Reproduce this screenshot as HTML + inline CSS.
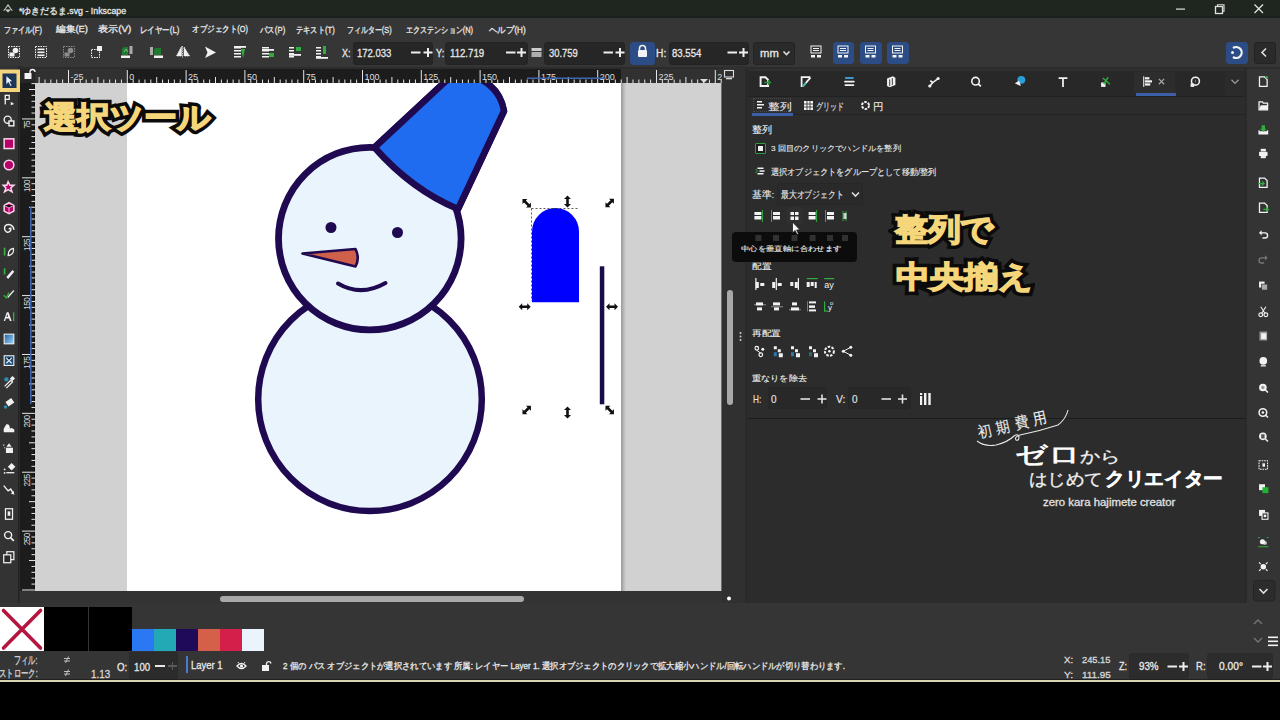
<!DOCTYPE html><html><head><meta charset="utf-8"><style>
*{margin:0;padding:0;box-sizing:border-box}
html,body{width:1280px;height:720px;overflow:hidden;background:#000;font-family:"Liberation Sans",sans-serif}
.a{position:absolute}
.t{position:absolute;white-space:nowrap;transform-origin:0 0;-webkit-text-stroke:0.3px currentColor}
svg{position:absolute;overflow:visible}
</style></head><body>
<div class="a" style="left:0px;top:0px;width:1280px;height:17px;background:#1f2620;"></div>
<div class="a" style="left:0px;top:16px;width:1280px;height:2px;background:#1b201c;"></div>
<div class="a" style="left:0px;top:18px;width:1280px;height:49px;background:#363636;"></div>
<div class="a" style="left:0px;top:67px;width:1280px;height:2px;background:#2c2c2c;"></div>
<div class="a" style="left:0px;top:66px;width:17.5px;height:537px;background:#333333;"></div>
<div class="a" style="left:17.5px;top:66px;width:1px;height:537px;background:#222222;"></div>
<div class="a" style="left:18.5px;top:66px;width:4.5px;height:537px;background:#2c2c2c;"></div>
<div class="a" style="left:20px;top:69px;width:702px;height:14px;background:#313131;"></div>
<div class="a" style="left:127px;top:69px;width:494px;height:14px;background:#1c1c1c;"></div>
<div class="a" style="left:20px;top:69px;width:15px;height:14px;background:#262626;"></div>
<div class="a" style="left:20px;top:83px;width:14px;height:508px;background:#1c1c1c;"></div>
<div class="a" style="left:34px;top:83px;width:1px;height:508px;background:#0e0e0e;"></div>
<div class="a" style="left:20px;top:591px;width:703px;height:12px;background:#333333;"></div>
<div class="a" style="left:722px;top:69px;width:23px;height:534px;background:#303030;"></div>
<div class="a" style="left:745px;top:69px;width:3px;height:534px;background:#2a2a2a;"></div>
<div class="a" style="left:748px;top:69px;width:498px;height:534px;background:#2c2c2c;"></div>
<div class="a" style="left:748px;top:69px;width:498px;height:2px;background:#303030;"></div>
<div class="a" style="left:748px;top:71px;width:498px;height:25px;background:#282828;"></div>
<div class="a" style="left:748px;top:96px;width:498px;height:1px;background:#212121;"></div>
<div class="a" style="left:1245px;top:69px;width:1.5px;height:534px;background:#2a2a2a;"></div>
<div class="a" style="left:1246.5px;top:69px;width:33.5px;height:534px;background:#343434;"></div>
<div class="a" style="left:0px;top:603px;width:1280px;height:48px;background:#353535;"></div>
<div class="a" style="left:0px;top:651px;width:1280px;height:29px;background:#353535;"></div>
<div class="a" style="left:0px;top:679px;width:1280px;height:1px;background:#202020;"></div>
<div class="a" style="left:0px;top:680px;width:1280px;height:2px;background:#d8d6b2;"></div>
<div class="a" style="left:0px;top:682px;width:1280px;height:38px;background:#000;"></div>
<svg style="left:35px;top:83px" width="687" height="508" viewBox="35 83 687 508">
<defs><clipPath id="cv"><rect x="35" y="83" width="687" height="508"/></clipPath>
<linearGradient id="sh" x1="0" x2="1"><stop offset="0" stop-color="#9a9a9a"/><stop offset="1" stop-color="#d1d1d1"/></linearGradient></defs>
<g clip-path="url(#cv)">
<rect x="35" y="83" width="687" height="508" fill="#d1d1d1"/>
<rect x="621" y="83" width="5" height="508" fill="url(#sh)"/><rect x="721.5" y="83" width="1.5" height="508" fill="#0a0a0a"/>
<rect x="127" y="83" width="494" height="508" fill="#ffffff"/>

<circle cx="370" cy="399.2" r="111.8" fill="#eaf4fc" stroke="#1f0a52" stroke-width="6.5"/>
<path d="M374.5,147.5 L447,80 L478,78 Q500,88 504,111 L458,209 Q412,190 374.5,147.5 Z" fill="#1f6cf0" stroke="#1f0a52" stroke-width="6.5" stroke-linejoin="round"/>
<circle cx="369.8" cy="238.6" r="91.3" fill="#eaf4fc" stroke="#1f0a52" stroke-width="6.8"/>
<path d="M374.5,147.5 L447,80 L478,78 Q500,88 504,111 L458,209 Q412,190 374.5,147.5 Z" fill="#1f6cf0" stroke="#1f0a52" stroke-width="6.5" stroke-linejoin="round"/>
<circle cx="331" cy="227.5" r="5.5" fill="#1f0a52"/><circle cx="397.5" cy="232.5" r="5.5" fill="#1f0a52"/>
<path d="M302.5,253.5 L355.5,249 Q360,258 355.5,266.5 Z" fill="#d1604b" stroke="#1f0a52" stroke-width="2.6" stroke-linejoin="round"/>
<path d="M338,283.5 Q361,297 385.5,283" fill="none" stroke="#1f0a52" stroke-width="4" stroke-linecap="round"/>
<path d="M532,302.2 L532,231.5 A23.5,23.5 0 0 1 579,231.5 L579,302.2 Z" fill="#0000ff"/>
<path d="M531.5,208.5 H579 M531.5,208.5 V301" stroke="#333" stroke-width="0.8" stroke-dasharray="2,2" fill="none"/>
<rect x="599.8" y="266.3" width="4.5" height="138" fill="#1a0a4a"/>
<g transform="translate(526.7,203.3) rotate(45)"><path d="M-6,0 L-2.5,-3.5 L-2.5,-1.3 L2.5,-1.3 L2.5,-3.5 L6,0 L2.5,3.5 L2.5,1.3 L-2.5,1.3 L-2.5,3.5 Z" fill="#111"/></g>
<g transform="translate(567.5,201.5) rotate(90)"><path d="M-6,0 L-2.5,-3.5 L-2.5,-1.3 L2.5,-1.3 L2.5,-3.5 L6,0 L2.5,3.5 L2.5,1.3 L-2.5,1.3 L-2.5,3.5 Z" fill="#111"/></g>
<g transform="translate(609.7,203) rotate(-45)"><path d="M-6,0 L-2.5,-3.5 L-2.5,-1.3 L2.5,-1.3 L2.5,-3.5 L6,0 L2.5,3.5 L2.5,1.3 L-2.5,1.3 L-2.5,3.5 Z" fill="#111"/></g>
<g transform="translate(524.7,306.7) rotate(0)"><path d="M-6,0 L-2.5,-3.5 L-2.5,-1.3 L2.5,-1.3 L2.5,-3.5 L6,0 L2.5,3.5 L2.5,1.3 L-2.5,1.3 L-2.5,3.5 Z" fill="#111"/></g>
<g transform="translate(612,306.7) rotate(0)"><path d="M-6,0 L-2.5,-3.5 L-2.5,-1.3 L2.5,-1.3 L2.5,-3.5 L6,0 L2.5,3.5 L2.5,1.3 L-2.5,1.3 L-2.5,3.5 Z" fill="#111"/></g>
<g transform="translate(526.7,410) rotate(-45)"><path d="M-6,0 L-2.5,-3.5 L-2.5,-1.3 L2.5,-1.3 L2.5,-3.5 L6,0 L2.5,3.5 L2.5,1.3 L-2.5,1.3 L-2.5,3.5 Z" fill="#111"/></g>
<g transform="translate(567.5,412.5) rotate(90)"><path d="M-6,0 L-2.5,-3.5 L-2.5,-1.3 L2.5,-1.3 L2.5,-3.5 L6,0 L2.5,3.5 L2.5,1.3 L-2.5,1.3 L-2.5,3.5 Z" fill="#111"/></g>
<g transform="translate(609.7,410) rotate(45)"><path d="M-6,0 L-2.5,-3.5 L-2.5,-1.3 L2.5,-1.3 L2.5,-3.5 L6,0 L2.5,3.5 L2.5,1.3 L-2.5,1.3 L-2.5,3.5 Z" fill="#111"/></g>
</g></svg>
<svg style="left:0;top:0" width="1280" height="720"><rect x="38.60" y="77.00" width="1" height="6" fill="#e6e6e6"/><rect x="44.48" y="79.50" width="1" height="3.5" fill="#e6e6e6"/><rect x="50.36" y="79.50" width="1" height="3.5" fill="#e6e6e6"/><rect x="56.24" y="79.50" width="1" height="3.5" fill="#e6e6e6"/><rect x="62.12" y="79.50" width="1" height="3.5" fill="#e6e6e6"/><rect x="68.00" y="70.00" width="1" height="13" fill="#e6e6e6"/><rect x="73.88" y="79.50" width="1" height="3.5" fill="#e6e6e6"/><rect x="79.76" y="79.50" width="1" height="3.5" fill="#e6e6e6"/><rect x="85.64" y="79.50" width="1" height="3.5" fill="#e6e6e6"/><rect x="91.52" y="79.50" width="1" height="3.5" fill="#e6e6e6"/><rect x="97.40" y="77.00" width="1" height="6" fill="#e6e6e6"/><rect x="103.28" y="79.50" width="1" height="3.5" fill="#e6e6e6"/><rect x="109.16" y="79.50" width="1" height="3.5" fill="#e6e6e6"/><rect x="115.04" y="79.50" width="1" height="3.5" fill="#e6e6e6"/><rect x="120.92" y="79.50" width="1" height="3.5" fill="#e6e6e6"/><rect x="126.80" y="70.00" width="1" height="13" fill="#e6e6e6"/><rect x="132.68" y="79.50" width="1" height="3.5" fill="#e6e6e6"/><rect x="138.56" y="79.50" width="1" height="3.5" fill="#e6e6e6"/><rect x="144.44" y="79.50" width="1" height="3.5" fill="#e6e6e6"/><rect x="150.32" y="79.50" width="1" height="3.5" fill="#e6e6e6"/><rect x="156.20" y="77.00" width="1" height="6" fill="#e6e6e6"/><rect x="162.08" y="79.50" width="1" height="3.5" fill="#e6e6e6"/><rect x="167.96" y="79.50" width="1" height="3.5" fill="#e6e6e6"/><rect x="173.84" y="79.50" width="1" height="3.5" fill="#e6e6e6"/><rect x="179.72" y="79.50" width="1" height="3.5" fill="#e6e6e6"/><rect x="185.60" y="70.00" width="1" height="13" fill="#e6e6e6"/><rect x="191.48" y="79.50" width="1" height="3.5" fill="#e6e6e6"/><rect x="197.36" y="79.50" width="1" height="3.5" fill="#e6e6e6"/><rect x="203.24" y="79.50" width="1" height="3.5" fill="#e6e6e6"/><rect x="209.12" y="79.50" width="1" height="3.5" fill="#e6e6e6"/><rect x="215.00" y="77.00" width="1" height="6" fill="#e6e6e6"/><rect x="220.88" y="79.50" width="1" height="3.5" fill="#e6e6e6"/><rect x="226.76" y="79.50" width="1" height="3.5" fill="#e6e6e6"/><rect x="232.64" y="79.50" width="1" height="3.5" fill="#e6e6e6"/><rect x="238.52" y="79.50" width="1" height="3.5" fill="#e6e6e6"/><rect x="244.40" y="70.00" width="1" height="13" fill="#e6e6e6"/><rect x="250.28" y="79.50" width="1" height="3.5" fill="#e6e6e6"/><rect x="256.16" y="79.50" width="1" height="3.5" fill="#e6e6e6"/><rect x="262.04" y="79.50" width="1" height="3.5" fill="#e6e6e6"/><rect x="267.92" y="79.50" width="1" height="3.5" fill="#e6e6e6"/><rect x="273.80" y="77.00" width="1" height="6" fill="#e6e6e6"/><rect x="279.68" y="79.50" width="1" height="3.5" fill="#e6e6e6"/><rect x="285.56" y="79.50" width="1" height="3.5" fill="#e6e6e6"/><rect x="291.44" y="79.50" width="1" height="3.5" fill="#e6e6e6"/><rect x="297.32" y="79.50" width="1" height="3.5" fill="#e6e6e6"/><rect x="303.20" y="70.00" width="1" height="13" fill="#e6e6e6"/><rect x="309.08" y="79.50" width="1" height="3.5" fill="#e6e6e6"/><rect x="314.96" y="79.50" width="1" height="3.5" fill="#e6e6e6"/><rect x="320.84" y="79.50" width="1" height="3.5" fill="#e6e6e6"/><rect x="326.72" y="79.50" width="1" height="3.5" fill="#e6e6e6"/><rect x="332.60" y="77.00" width="1" height="6" fill="#e6e6e6"/><rect x="338.48" y="79.50" width="1" height="3.5" fill="#e6e6e6"/><rect x="344.36" y="79.50" width="1" height="3.5" fill="#e6e6e6"/><rect x="350.24" y="79.50" width="1" height="3.5" fill="#e6e6e6"/><rect x="356.12" y="79.50" width="1" height="3.5" fill="#e6e6e6"/><rect x="362.00" y="70.00" width="1" height="13" fill="#e6e6e6"/><rect x="367.88" y="79.50" width="1" height="3.5" fill="#e6e6e6"/><rect x="373.76" y="79.50" width="1" height="3.5" fill="#e6e6e6"/><rect x="379.64" y="79.50" width="1" height="3.5" fill="#e6e6e6"/><rect x="385.52" y="79.50" width="1" height="3.5" fill="#e6e6e6"/><rect x="391.40" y="77.00" width="1" height="6" fill="#e6e6e6"/><rect x="397.28" y="79.50" width="1" height="3.5" fill="#e6e6e6"/><rect x="403.16" y="79.50" width="1" height="3.5" fill="#e6e6e6"/><rect x="409.04" y="79.50" width="1" height="3.5" fill="#e6e6e6"/><rect x="414.92" y="79.50" width="1" height="3.5" fill="#e6e6e6"/><rect x="420.80" y="70.00" width="1" height="13" fill="#e6e6e6"/><rect x="426.68" y="79.50" width="1" height="3.5" fill="#e6e6e6"/><rect x="432.56" y="79.50" width="1" height="3.5" fill="#e6e6e6"/><rect x="438.44" y="79.50" width="1" height="3.5" fill="#e6e6e6"/><rect x="444.32" y="79.50" width="1" height="3.5" fill="#e6e6e6"/><rect x="450.20" y="77.00" width="1" height="6" fill="#e6e6e6"/><rect x="456.08" y="79.50" width="1" height="3.5" fill="#e6e6e6"/><rect x="461.96" y="79.50" width="1" height="3.5" fill="#e6e6e6"/><rect x="467.84" y="79.50" width="1" height="3.5" fill="#e6e6e6"/><rect x="473.72" y="79.50" width="1" height="3.5" fill="#e6e6e6"/><rect x="479.60" y="70.00" width="1" height="13" fill="#e6e6e6"/><rect x="485.48" y="79.50" width="1" height="3.5" fill="#e6e6e6"/><rect x="491.36" y="79.50" width="1" height="3.5" fill="#e6e6e6"/><rect x="497.24" y="79.50" width="1" height="3.5" fill="#e6e6e6"/><rect x="503.12" y="79.50" width="1" height="3.5" fill="#e6e6e6"/><rect x="509.00" y="77.00" width="1" height="6" fill="#e6e6e6"/><rect x="514.88" y="79.50" width="1" height="3.5" fill="#e6e6e6"/><rect x="520.76" y="79.50" width="1" height="3.5" fill="#e6e6e6"/><rect x="526.64" y="79.50" width="1" height="3.5" fill="#e6e6e6"/><rect x="532.52" y="79.50" width="1" height="3.5" fill="#e6e6e6"/><rect x="538.40" y="70.00" width="1" height="13" fill="#e6e6e6"/><rect x="544.28" y="79.50" width="1" height="3.5" fill="#e6e6e6"/><rect x="550.16" y="79.50" width="1" height="3.5" fill="#e6e6e6"/><rect x="556.04" y="79.50" width="1" height="3.5" fill="#e6e6e6"/><rect x="561.92" y="79.50" width="1" height="3.5" fill="#e6e6e6"/><rect x="567.80" y="77.00" width="1" height="6" fill="#e6e6e6"/><rect x="573.68" y="79.50" width="1" height="3.5" fill="#e6e6e6"/><rect x="579.56" y="79.50" width="1" height="3.5" fill="#e6e6e6"/><rect x="585.44" y="79.50" width="1" height="3.5" fill="#e6e6e6"/><rect x="591.32" y="79.50" width="1" height="3.5" fill="#e6e6e6"/><rect x="597.20" y="70.00" width="1" height="13" fill="#e6e6e6"/><rect x="603.08" y="79.50" width="1" height="3.5" fill="#e6e6e6"/><rect x="608.96" y="79.50" width="1" height="3.5" fill="#e6e6e6"/><rect x="614.84" y="79.50" width="1" height="3.5" fill="#e6e6e6"/><rect x="620.72" y="79.50" width="1" height="3.5" fill="#e6e6e6"/><rect x="626.60" y="77.00" width="1" height="6" fill="#e6e6e6"/><rect x="632.48" y="79.50" width="1" height="3.5" fill="#e6e6e6"/><rect x="638.36" y="79.50" width="1" height="3.5" fill="#e6e6e6"/><rect x="644.24" y="79.50" width="1" height="3.5" fill="#e6e6e6"/><rect x="650.12" y="79.50" width="1" height="3.5" fill="#e6e6e6"/><rect x="656.00" y="70.00" width="1" height="13" fill="#e6e6e6"/><rect x="661.88" y="79.50" width="1" height="3.5" fill="#e6e6e6"/><rect x="667.76" y="79.50" width="1" height="3.5" fill="#e6e6e6"/><rect x="673.64" y="79.50" width="1" height="3.5" fill="#e6e6e6"/><rect x="679.52" y="79.50" width="1" height="3.5" fill="#e6e6e6"/><rect x="685.40" y="77.00" width="1" height="6" fill="#e6e6e6"/><rect x="691.28" y="79.50" width="1" height="3.5" fill="#e6e6e6"/><rect x="697.16" y="79.50" width="1" height="3.5" fill="#e6e6e6"/><rect x="703.04" y="79.50" width="1" height="3.5" fill="#e6e6e6"/><rect x="708.92" y="79.50" width="1" height="3.5" fill="#e6e6e6"/><rect x="714.80" y="70.00" width="1" height="13" fill="#e6e6e6"/><rect x="720.68" y="79.50" width="1" height="3.5" fill="#e6e6e6"/><text x="70.5" y="79.5" font-size="9" fill="#dedede" font-family="Liberation Sans">-25</text><text x="129.3" y="79.5" font-size="9" fill="#dedede" font-family="Liberation Sans">0</text><text x="188.1" y="79.5" font-size="9" fill="#dedede" font-family="Liberation Sans">25</text><text x="246.9" y="79.5" font-size="9" fill="#dedede" font-family="Liberation Sans">50</text><text x="305.7" y="79.5" font-size="9" fill="#dedede" font-family="Liberation Sans">75</text><text x="364.5" y="79.5" font-size="9" fill="#dedede" font-family="Liberation Sans">100</text><text x="423.3" y="79.5" font-size="9" fill="#dedede" font-family="Liberation Sans">125</text><text x="482.1" y="79.5" font-size="9" fill="#dedede" font-family="Liberation Sans">150</text><text x="540.9" y="79.5" font-size="9" fill="#dedede" font-family="Liberation Sans">175</text><text x="599.7" y="79.5" font-size="9" fill="#dedede" font-family="Liberation Sans">200</text><text x="658.5" y="79.5" font-size="9" fill="#dedede" font-family="Liberation Sans">225</text><text x="717.3" y="79.5" font-size="9" fill="#dedede" font-family="Liberation Sans">250</text><rect x="527" y="77.5" width="79" height="1.5" fill="#3e66b0"/><path d="M700,79 L708,79 L704,83 Z" fill="#ddd"/><rect x="31.50" y="83.11" width="3.5" height="1" fill="#e6e6e6"/><rect x="29.00" y="89.00" width="6" height="1" fill="#e6e6e6"/><rect x="31.50" y="94.89" width="3.5" height="1" fill="#e6e6e6"/><rect x="31.50" y="100.78" width="3.5" height="1" fill="#e6e6e6"/><rect x="31.50" y="106.66" width="3.5" height="1" fill="#e6e6e6"/><rect x="31.50" y="112.55" width="3.5" height="1" fill="#e6e6e6"/><rect x="22.00" y="118.44" width="13" height="1" fill="#e6e6e6"/><rect x="31.50" y="124.33" width="3.5" height="1" fill="#e6e6e6"/><rect x="31.50" y="130.22" width="3.5" height="1" fill="#e6e6e6"/><rect x="31.50" y="136.10" width="3.5" height="1" fill="#e6e6e6"/><rect x="31.50" y="141.99" width="3.5" height="1" fill="#e6e6e6"/><rect x="29.00" y="147.88" width="6" height="1" fill="#e6e6e6"/><rect x="31.50" y="153.77" width="3.5" height="1" fill="#e6e6e6"/><rect x="31.50" y="159.66" width="3.5" height="1" fill="#e6e6e6"/><rect x="31.50" y="165.54" width="3.5" height="1" fill="#e6e6e6"/><rect x="31.50" y="171.43" width="3.5" height="1" fill="#e6e6e6"/><rect x="22.00" y="177.32" width="13" height="1" fill="#e6e6e6"/><rect x="31.50" y="183.21" width="3.5" height="1" fill="#e6e6e6"/><rect x="31.50" y="189.10" width="3.5" height="1" fill="#e6e6e6"/><rect x="31.50" y="194.98" width="3.5" height="1" fill="#e6e6e6"/><rect x="31.50" y="200.87" width="3.5" height="1" fill="#e6e6e6"/><rect x="29.00" y="206.76" width="6" height="1" fill="#e6e6e6"/><rect x="31.50" y="212.65" width="3.5" height="1" fill="#e6e6e6"/><rect x="31.50" y="218.54" width="3.5" height="1" fill="#e6e6e6"/><rect x="31.50" y="224.42" width="3.5" height="1" fill="#e6e6e6"/><rect x="31.50" y="230.31" width="3.5" height="1" fill="#e6e6e6"/><rect x="22.00" y="236.20" width="13" height="1" fill="#e6e6e6"/><rect x="31.50" y="242.09" width="3.5" height="1" fill="#e6e6e6"/><rect x="31.50" y="247.98" width="3.5" height="1" fill="#e6e6e6"/><rect x="31.50" y="253.86" width="3.5" height="1" fill="#e6e6e6"/><rect x="31.50" y="259.75" width="3.5" height="1" fill="#e6e6e6"/><rect x="29.00" y="265.64" width="6" height="1" fill="#e6e6e6"/><rect x="31.50" y="271.53" width="3.5" height="1" fill="#e6e6e6"/><rect x="31.50" y="277.42" width="3.5" height="1" fill="#e6e6e6"/><rect x="31.50" y="283.30" width="3.5" height="1" fill="#e6e6e6"/><rect x="31.50" y="289.19" width="3.5" height="1" fill="#e6e6e6"/><rect x="22.00" y="295.08" width="13" height="1" fill="#e6e6e6"/><rect x="31.50" y="300.97" width="3.5" height="1" fill="#e6e6e6"/><rect x="31.50" y="306.86" width="3.5" height="1" fill="#e6e6e6"/><rect x="31.50" y="312.74" width="3.5" height="1" fill="#e6e6e6"/><rect x="31.50" y="318.63" width="3.5" height="1" fill="#e6e6e6"/><rect x="29.00" y="324.52" width="6" height="1" fill="#e6e6e6"/><rect x="31.50" y="330.41" width="3.5" height="1" fill="#e6e6e6"/><rect x="31.50" y="336.30" width="3.5" height="1" fill="#e6e6e6"/><rect x="31.50" y="342.18" width="3.5" height="1" fill="#e6e6e6"/><rect x="31.50" y="348.07" width="3.5" height="1" fill="#e6e6e6"/><rect x="22.00" y="353.96" width="13" height="1" fill="#e6e6e6"/><rect x="31.50" y="359.85" width="3.5" height="1" fill="#e6e6e6"/><rect x="31.50" y="365.74" width="3.5" height="1" fill="#e6e6e6"/><rect x="31.50" y="371.62" width="3.5" height="1" fill="#e6e6e6"/><rect x="31.50" y="377.51" width="3.5" height="1" fill="#e6e6e6"/><rect x="29.00" y="383.40" width="6" height="1" fill="#e6e6e6"/><rect x="31.50" y="389.29" width="3.5" height="1" fill="#e6e6e6"/><rect x="31.50" y="395.18" width="3.5" height="1" fill="#e6e6e6"/><rect x="31.50" y="401.06" width="3.5" height="1" fill="#e6e6e6"/><rect x="31.50" y="406.95" width="3.5" height="1" fill="#e6e6e6"/><rect x="22.00" y="412.84" width="13" height="1" fill="#e6e6e6"/><rect x="31.50" y="418.73" width="3.5" height="1" fill="#e6e6e6"/><rect x="31.50" y="424.62" width="3.5" height="1" fill="#e6e6e6"/><rect x="31.50" y="430.50" width="3.5" height="1" fill="#e6e6e6"/><rect x="31.50" y="436.39" width="3.5" height="1" fill="#e6e6e6"/><rect x="29.00" y="442.28" width="6" height="1" fill="#e6e6e6"/><rect x="31.50" y="448.17" width="3.5" height="1" fill="#e6e6e6"/><rect x="31.50" y="454.06" width="3.5" height="1" fill="#e6e6e6"/><rect x="31.50" y="459.94" width="3.5" height="1" fill="#e6e6e6"/><rect x="31.50" y="465.83" width="3.5" height="1" fill="#e6e6e6"/><rect x="22.00" y="471.72" width="13" height="1" fill="#e6e6e6"/><rect x="31.50" y="477.61" width="3.5" height="1" fill="#e6e6e6"/><rect x="31.50" y="483.50" width="3.5" height="1" fill="#e6e6e6"/><rect x="31.50" y="489.38" width="3.5" height="1" fill="#e6e6e6"/><rect x="31.50" y="495.27" width="3.5" height="1" fill="#e6e6e6"/><rect x="29.00" y="501.16" width="6" height="1" fill="#e6e6e6"/><rect x="31.50" y="507.05" width="3.5" height="1" fill="#e6e6e6"/><rect x="31.50" y="512.94" width="3.5" height="1" fill="#e6e6e6"/><rect x="31.50" y="518.82" width="3.5" height="1" fill="#e6e6e6"/><rect x="31.50" y="524.71" width="3.5" height="1" fill="#e6e6e6"/><rect x="22.00" y="530.60" width="13" height="1" fill="#e6e6e6"/><rect x="31.50" y="536.49" width="3.5" height="1" fill="#e6e6e6"/><rect x="31.50" y="542.38" width="3.5" height="1" fill="#e6e6e6"/><rect x="31.50" y="548.26" width="3.5" height="1" fill="#e6e6e6"/><rect x="31.50" y="554.15" width="3.5" height="1" fill="#e6e6e6"/><rect x="29.00" y="560.04" width="6" height="1" fill="#e6e6e6"/><rect x="31.50" y="565.93" width="3.5" height="1" fill="#e6e6e6"/><rect x="31.50" y="571.82" width="3.5" height="1" fill="#e6e6e6"/><rect x="31.50" y="577.70" width="3.5" height="1" fill="#e6e6e6"/><rect x="31.50" y="583.59" width="3.5" height="1" fill="#e6e6e6"/><rect x="22.00" y="589.48" width="13" height="1" fill="#e6e6e6"/><text transform="translate(29.5,128.7) rotate(-90)" font-size="8.3" fill="#dedede" font-family="Liberation Sans" textLength="8.4">75</text><text transform="translate(29.5,192.0) rotate(-90)" font-size="8.3" fill="#dedede" font-family="Liberation Sans" textLength="12.6">100</text><text transform="translate(29.5,250.9) rotate(-90)" font-size="8.3" fill="#dedede" font-family="Liberation Sans" textLength="12.6">125</text><text transform="translate(29.5,309.8) rotate(-90)" font-size="8.3" fill="#dedede" font-family="Liberation Sans" textLength="12.6">150</text><text transform="translate(29.5,368.7) rotate(-90)" font-size="8.3" fill="#dedede" font-family="Liberation Sans" textLength="12.6">175</text><text transform="translate(29.5,427.5) rotate(-90)" font-size="8.3" fill="#dedede" font-family="Liberation Sans" textLength="12.6">200</text><text transform="translate(29.5,486.4) rotate(-90)" font-size="8.3" fill="#dedede" font-family="Liberation Sans" textLength="12.6">225</text><text transform="translate(29.5,545.3) rotate(-90)" font-size="8.3" fill="#dedede" font-family="Liberation Sans" textLength="12.6">250</text><rect x="30" y="207" width="1.5" height="197" fill="#3e66b0"/></svg>
<div class="a" style="left:722px;top:66px;width:23px;height:17px;background:#303030;"></div>
<div class="a" style="left:352.5px;top:41.5px;width:80.5px;height:23.0px;background:#262626;border-radius:3px;border:1px solid #232323"></div>
<div class="a" style="left:445px;top:41.5px;width:83px;height:23.0px;background:#262626;border-radius:3px;border:1px solid #232323"></div>
<div class="a" style="left:544px;top:41.5px;width:81px;height:23.0px;background:#262626;border-radius:3px;border:1px solid #232323"></div>
<div class="a" style="left:629.5px;top:41.5px;width:25.5px;height:23.0px;background:#2b4c85;border-radius:3px;border:1px solid #2b4c85"></div>
<div class="a" style="left:669px;top:41.5px;width:80px;height:23.0px;background:#262626;border-radius:3px;border:1px solid #232323"></div>
<div class="a" style="left:752.5px;top:41.5px;width:42.5px;height:23.0px;background:#2a2a2a;border-radius:3px;border:1px solid #232323"></div>
<div class="a" style="left:832.5px;top:41.5px;width:21.5px;height:22.0px;background:#2b4c85;border-radius:3px;border:1px solid #2b4c85"></div>
<div class="a" style="left:860px;top:41.5px;width:21.5px;height:22.0px;background:#2b4c85;border-radius:3px;border:1px solid #2b4c85"></div>
<div class="a" style="left:886.5px;top:41.5px;width:22.5px;height:22.0px;background:#2b4c85;border-radius:3px;border:1px solid #2b4c85"></div>
<div class="a" style="left:1225.5px;top:41.5px;width:22.0px;height:22.0px;background:#2b4c85;border-radius:3px;border:1px solid #2b4c85"></div>
<div class="a" style="left:1253.5px;top:41.5px;width:22.0px;height:22.0px;background:#2a2a2a;border-radius:3px;border:1px solid #222"></div>
<svg style="left:0;top:0" width="1280" height="720"><rect x="411" y="51.5" width="9.5" height="2" fill="#eee"/><rect x="423.5" y="51.5" width="9" height="2" fill="#eee"/><rect x="427.0" y="48.0" width="2" height="9" fill="#eee"/></svg>
<svg style="left:0;top:0" width="1280" height="720"><rect x="506" y="51.5" width="9.5" height="2" fill="#eee"/><rect x="517" y="51.5" width="9" height="2" fill="#eee"/><rect x="520.5" y="48.0" width="2" height="9" fill="#eee"/></svg>
<svg style="left:0;top:0" width="1280" height="720"><rect x="603.5" y="51.5" width="9.5" height="2" fill="#eee"/><rect x="615.5" y="51.5" width="9" height="2" fill="#eee"/><rect x="619.0" y="48.0" width="2" height="9" fill="#eee"/></svg>
<svg style="left:0;top:0" width="1280" height="720"><rect x="727.5" y="51.5" width="9.5" height="2" fill="#eee"/><rect x="739" y="51.5" width="9" height="2" fill="#eee"/><rect x="742.5" y="48.0" width="2" height="9" fill="#eee"/></svg>
<svg style="left:0;top:0" width="1280" height="720"><path d="M783.5,51.5 L786.5,54.5 L789.5,51.5" stroke="#ddd" stroke-width="1.6" fill="none"/></svg>
<div class="a" style="left:1134px;top:72px;width:41px;height:21px;background:#2d2d2d;"></div>
<div class="a" style="left:1225px;top:72px;width:19px;height:24px;background:#2b2b2b;"></div>
<div class="a" style="left:1135.5px;top:92.5px;width:40px;height:3px;background:#3d5fa8;"></div>
<div class="a" style="left:752px;top:113px;width:41px;height:3px;background:#3d5fa8;"></div>
<div class="a" style="left:752.5px;top:98px;width:38px;height:14px;border:1px dotted #4a4a4a"></div>
<div class="a" style="left:793px;top:113.5px;width:453px;height:1px;background:#232323;"></div>
<div class="a" style="left:777px;top:183px;width:86px;height:22px;background:#2a2a2a;border-radius:3px;border:1px solid #262626"></div>
<svg style="left:0;top:0" width="1280" height="720"><path d="M852,192.5 L855.5,196 L859,192.5" stroke="#ddd" stroke-width="1.6" fill="none"/></svg>
<div class="a" style="left:787px;top:207px;width:15px;height:16.5px;background:#303030;border-radius:2px;border:1px solid #303030"></div>
<div class="a" style="left:767.5px;top:387px;width:59.5px;height:22px;background:#282828;border-radius:3px;border:1px solid #262626"></div>
<div class="a" style="left:848px;top:387px;width:62.5px;height:22px;background:#282828;border-radius:3px;border:1px solid #262626"></div>
<svg style="left:0;top:0" width="1280" height="720"><rect x="800.5" y="398.2" width="9.5" height="1.6" fill="#e0e0e0"/><rect x="817.5" y="398.2" width="9" height="1.6" fill="#e0e0e0"/><rect x="821.2" y="394.5" width="1.6" height="9" fill="#e0e0e0"/></svg>
<svg style="left:0;top:0" width="1280" height="720"><rect x="881.5" y="398.2" width="9.5" height="1.6" fill="#e0e0e0"/><rect x="898" y="398.2" width="9" height="1.6" fill="#e0e0e0"/><rect x="901.7" y="394.5" width="1.6" height="9" fill="#e0e0e0"/></svg>
<div class="a" style="left:748px;top:417.5px;width:498px;height:1.5px;background:#1c1c1c;"></div>
<div class="a" style="left:755px;top:143px;width:10.5px;height:10.5px;border:1px solid #2f9a40;background:#1e1e1e;border-radius:1px"></div>
<div class="a" style="left:757.5px;top:145.5px;width:5.5px;height:5.5px;background:#f0f0f0;"></div>
<div class="a" style="left:128.5px;top:652px;width:49.5px;height:27px;background:#2c2c2c;border-radius:2px;border:1px solid #2a2a2a"></div>
<div class="a" style="left:168px;top:665.3px;width:8.5px;height:1.4px;background:#5a5a5a;"></div>
<div class="a" style="left:171.55px;top:661.8px;width:1.4px;height:8.5px;background:#5a5a5a;"></div>
<div class="a" style="left:155px;top:665.2px;width:10px;height:1.8px;background:#e8e8e8;"></div>
<div class="a" style="left:185.5px;top:656px;width:2px;height:17px;background:#4a7ad0;"></div>
<div class="a" style="left:1129px;top:652.5px;width:60px;height:26.0px;background:#2c2c2c;border-radius:3px;border:1px solid #2a2a2a"></div>
<div class="a" style="left:1207px;top:652.5px;width:65.5px;height:26.0px;background:#2c2c2c;border-radius:3px;border:1px solid #2a2a2a"></div>
<svg style="left:0;top:0" width="1280" height="720"><rect x="1167.5" y="665.5" width="9.5" height="2" fill="#eee"/><rect x="1179" y="665.5" width="9" height="2" fill="#eee"/><rect x="1182.5" y="662.0" width="2" height="9" fill="#eee"/></svg>
<svg style="left:0;top:0" width="1280" height="720"><rect x="1252" y="665.5" width="9.5" height="2" fill="#eee"/><rect x="1263" y="665.5" width="9" height="2" fill="#eee"/><rect x="1266.5" y="662.0" width="2" height="9" fill="#eee"/></svg>
<div class="a" style="left:0px;top:606.5px;width:44px;height:44.5px;background:#ffffff;"></div>
<svg style="left:0;top:606.5px" width="44" height="44.5"><path d="M3.5,3.5 L40.5,41 M40.5,3.5 L3.5,41" stroke="#b5163f" stroke-width="3.6" stroke-linecap="round"/></svg>
<div class="a" style="left:44px;top:606.5px;width:44px;height:44.5px;background:#000;"></div>
<div class="a" style="left:88.5px;top:606.5px;width:43.5px;height:44.5px;background:#000;"></div>
<div class="a" style="left:132px;top:628.5px;width:22px;height:22.5px;background:#2b78f5;"></div>
<div class="a" style="left:154px;top:628.5px;width:22px;height:22.5px;background:#22a9b5;"></div>
<div class="a" style="left:176px;top:628.5px;width:22px;height:22.5px;background:#1e0a58;"></div>
<div class="a" style="left:198px;top:628.5px;width:22px;height:22.5px;background:#d4604a;"></div>
<div class="a" style="left:220px;top:628.5px;width:22px;height:22.5px;background:#d41f4a;"></div>
<div class="a" style="left:242px;top:628.5px;width:22px;height:22.5px;background:#eaf4fc;"></div>
<div class="a" style="left:220px;top:596px;width:304px;height:6px;background:#a9a9a9;border-radius:3px"></div>
<div class="a" style="left:726.5px;top:289.5px;width:6px;height:115px;background:#a9a9a9;border-radius:3px"></div>
<svg style="left:0;top:0" width="1280" height="720"><circle cx="729" cy="598.5" r="2" fill="#fff"/></svg>
<svg style="left:0;top:0" width="1280" height="720"><circle cx="740.5" cy="333" r="1" fill="#ccc"/><circle cx="740.5" cy="336.5" r="1" fill="#ccc"/><circle cx="740.5" cy="340" r="1" fill="#ccc"/></svg>
<div class="a" style="left:732px;top:231.5px;width:125px;height:30px;background:#0c0c0c;border-radius:4px"></div>
<div class="t" style="left:19.28px;top:6.81px;font-size:8.95px;line-height:8.95px;transform:scaleX(0.9868);color:#e6e6e6;font-weight:normal;">*ゆきだるま.svg - Inkscape</div>
<div class="t" style="left:4.25px;top:24.75px;font-size:9.47px;line-height:9.47px;transform:scaleX(0.7879);color:#e8e8e8;font-weight:normal;">ファイル(F)</div>
<div class="t" style="left:56.00px;top:25.48px;font-size:8.78px;line-height:8.78px;transform:scaleX(1.0780);color:#e8e8e8;font-weight:normal;">編集(E)</div>
<div class="t" style="left:97.75px;top:25.48px;font-size:8.78px;line-height:8.78px;transform:scaleX(1.1214);color:#e8e8e8;font-weight:normal;">表示(V)</div>
<div class="t" style="left:139.82px;top:24.75px;font-size:9.47px;line-height:9.47px;transform:scaleX(0.8279);color:#e8e8e8;font-weight:normal;">レイヤー(L)</div>
<div class="t" style="left:192.45px;top:25.48px;font-size:8.78px;line-height:8.78px;transform:scaleX(0.8380);color:#e8e8e8;font-weight:normal;">オブジェクト(O)</div>
<div class="t" style="left:260.00px;top:24.75px;font-size:9.47px;line-height:9.47px;transform:scaleX(0.8254);color:#e8e8e8;font-weight:normal;">パス(P)</div>
<div class="t" style="left:296.43px;top:24.75px;font-size:9.47px;line-height:9.47px;transform:scaleX(0.8042);color:#e8e8e8;font-weight:normal;">テキスト(T)</div>
<div class="t" style="left:347.27px;top:24.75px;font-size:9.47px;line-height:9.47px;transform:scaleX(0.7738);color:#e8e8e8;font-weight:normal;">フィルター(S)</div>
<div class="t" style="left:405.94px;top:24.75px;font-size:9.47px;line-height:9.47px;transform:scaleX(0.7875);color:#e8e8e8;font-weight:normal;">エクステンション(N)</div>
<div class="t" style="left:489.00px;top:25.70px;font-size:8.57px;line-height:8.57px;transform:scaleX(0.9413);color:#e8e8e8;font-weight:normal;">ヘルプ(H)</div>
<div class="t" style="left:342.38px;top:47.81px;font-size:11.29px;line-height:11.29px;transform:scaleX(0.7948);color:#e8e8e8;font-weight:normal;">X:</div>
<div class="t" style="left:357.29px;top:47.81px;font-size:11.29px;line-height:11.29px;transform:scaleX(0.8430);color:#e8e8e8;font-weight:normal;">172.033</div>
<div class="t" style="left:435.57px;top:47.81px;font-size:11.29px;line-height:11.29px;transform:scaleX(0.8232);color:#e8e8e8;font-weight:normal;">Y:</div>
<div class="t" style="left:450.28px;top:47.81px;font-size:11.29px;line-height:11.29px;transform:scaleX(0.8537);color:#e8e8e8;font-weight:normal;">112.719</div>
<div class="t" style="left:548.53px;top:47.81px;font-size:11.29px;line-height:11.29px;transform:scaleX(0.8340);color:#e8e8e8;font-weight:normal;">30.759</div>
<div class="t" style="left:656.03px;top:47.81px;font-size:11.29px;line-height:11.29px;transform:scaleX(0.9069);color:#e8e8e8;font-weight:normal;">H:</div>
<div class="t" style="left:671.52px;top:47.81px;font-size:11.29px;line-height:11.29px;transform:scaleX(0.8518);color:#e8e8e8;font-weight:normal;">83.554</div>
<div class="t" style="left:759.95px;top:47.82px;font-size:11.27px;line-height:11.27px;transform:scaleX(1.0005);color:#e8e8e8;font-weight:normal;">mm</div>
<div class="t" style="left:767.71px;top:101.81px;font-size:9.89px;line-height:9.89px;transform:scaleX(1.1702);color:#e8e8e8;font-weight:normal;-webkit-text-stroke:0.12px currentColor;">整列</div>
<div class="t" style="left:816.27px;top:101.52px;font-size:10.44px;line-height:10.44px;transform:scaleX(0.6963);color:#e8e8e8;font-weight:normal;-webkit-text-stroke:0.12px currentColor;">グリッド</div>
<div class="t" style="left:872.66px;top:101.52px;font-size:10.44px;line-height:10.44px;transform:scaleX(1.0472);color:#e8e8e8;font-weight:normal;-webkit-text-stroke:0.12px currentColor;">円</div>
<div class="t" style="left:751.75px;top:124.81px;font-size:9.89px;line-height:9.89px;transform:scaleX(1.0000);color:#f0f0f0;font-weight:normal;-webkit-text-stroke:0.12px currentColor;">整列</div>
<div class="t" style="left:771.19px;top:145.31px;font-size:7.90px;line-height:7.90px;transform:scaleX(1.0257);color:#e8e8e8;font-weight:normal;-webkit-text-stroke:0.12px currentColor;">3 回目のクリックでハンドルを整列</div>
<div class="t" style="left:771.40px;top:167.70px;font-size:8.78px;line-height:8.78px;transform:scaleX(0.9067);color:#e8e8e8;font-weight:normal;-webkit-text-stroke:0.12px currentColor;">選択オブジェクトをグループとして移動/整列</div>
<div class="t" style="left:751.76px;top:189.85px;font-size:9.89px;line-height:9.89px;transform:scaleX(0.9758);color:#e8e8e8;font-weight:normal;-webkit-text-stroke:0.12px currentColor;">基準:</div>
<div class="t" style="left:780.81px;top:189.85px;font-size:9.89px;line-height:9.89px;transform:scaleX(0.7828);color:#e8e8e8;font-weight:normal;-webkit-text-stroke:0.12px currentColor;">最大オブジェクト</div>
<div class="t" style="left:741.06px;top:244.50px;font-size:7.41px;line-height:7.41px;transform:scaleX(1.1945);color:#f0f0f0;font-weight:normal;-webkit-text-stroke:0.12px currentColor;">中心を垂直軸に合わせます</div>
<div class="t" style="left:751.51px;top:262.69px;font-size:8.22px;line-height:8.22px;transform:scaleX(1.2013);color:#f0f0f0;font-weight:normal;-webkit-text-stroke:0.12px currentColor;">配置</div>
<div class="t" style="left:751.75px;top:328.88px;font-size:8.43px;line-height:8.43px;transform:scaleX(1.1939);color:#f0f0f0;font-weight:normal;-webkit-text-stroke:0.12px currentColor;">再配置</div>
<div class="t" style="left:751.78px;top:374.51px;font-size:7.70px;line-height:7.70px;transform:scaleX(1.1424);color:#f0f0f0;font-weight:normal;-webkit-text-stroke:0.12px currentColor;">重なりを除去</div>
<div class="t" style="left:752.98px;top:394.09px;font-size:10.71px;line-height:10.71px;transform:scaleX(0.7686);color:#e8e8e8;font-weight:normal;-webkit-text-stroke:0.12px currentColor;">H:</div>
<div class="t" style="left:771.25px;top:394.09px;font-size:10.71px;line-height:10.71px;transform:scaleX(0.9333);color:#e8e8e8;font-weight:normal;-webkit-text-stroke:0.12px currentColor;">0</div>
<div class="t" style="left:835.60px;top:394.09px;font-size:10.71px;line-height:10.71px;transform:scaleX(0.9729);color:#e8e8e8;font-weight:normal;-webkit-text-stroke:0.12px currentColor;">V:</div>
<div class="t" style="left:851.75px;top:394.09px;font-size:10.71px;line-height:10.71px;transform:scaleX(0.9333);color:#e8e8e8;font-weight:normal;-webkit-text-stroke:0.12px currentColor;">0</div>
<div class="t" style="left:1015.42px;top:442.61px;font-size:23.89px;line-height:23.89px;transform:scaleX(1.3258);color:#ffffff;font-weight:normal;-webkit-text-stroke:0.7px #fff;">ゼロ</div>
<div class="t" style="left:1080.31px;top:449.46px;font-size:15.54px;line-height:15.54px;transform:scaleX(1.2589);color:#f0f0f0;font-weight:normal;">から</div>
<div class="t" style="left:1029.38px;top:471.41px;font-size:17.49px;line-height:17.49px;transform:scaleX(1.0862);color:#f0f0f0;font-weight:normal;">はじめて</div>
<div class="t" style="left:1105.06px;top:470.12px;font-size:18.78px;line-height:18.78px;transform:scaleX(1.0338);color:#ffffff;font-weight:normal;-webkit-text-stroke:1.3px #fff;">クリエイター</div>
<div class="t" style="left:1042.71px;top:497.58px;font-size:10.21px;line-height:10.21px;transform:scaleX(1.1169);color:#e0e0e0;font-weight:normal;">zero kara hajimete creator</div>
<div class="t" style="left:14.31px;top:653.67px;font-size:11.61px;line-height:11.61px;transform:scaleX(0.5967);color:#d8d8d8;font-weight:normal;">フィル:</div>
<div class="t" style="left:-0.53px;top:668.38px;font-size:10.59px;line-height:10.59px;transform:scaleX(0.6688);color:#d8d8d8;font-weight:normal;">ストローク:</div>
<div class="t" style="left:91.26px;top:668.99px;font-size:11.43px;line-height:11.43px;transform:scaleX(0.8630);color:#d8d8d8;font-weight:normal;">1.13</div>
<div class="t" style="left:116.51px;top:661.99px;font-size:11.43px;line-height:11.43px;transform:scaleX(0.8514);color:#e8e8e8;font-weight:normal;">O:</div>
<div class="t" style="left:134.27px;top:661.99px;font-size:11.43px;line-height:11.43px;transform:scaleX(0.8468);color:#e8e8e8;font-weight:normal;">100</div>
<div class="t" style="left:190.79px;top:661.20px;font-size:10.00px;line-height:10.00px;transform:scaleX(0.9457);color:#e8e8e8;font-weight:normal;">Layer 1</div>
<div class="t" style="left:282.90px;top:661.98px;font-size:8.78px;line-height:8.78px;transform:scaleX(0.9215);color:#e8e8e8;font-weight:normal;">2 個の パス オブジェクトが選択されています 所属: レイヤー Layer 1. 選択オブジェクトのクリックで拡大縮小ハンドル/回転ハンドルが切り替わります.</div>
<div class="t" style="left:1064.16px;top:656.11px;font-size:9.29px;line-height:9.29px;transform:scaleX(1.0443);color:#d8d8d8;font-weight:normal;">X:</div>
<div class="t" style="left:1081.83px;top:656.11px;font-size:9.29px;line-height:9.29px;transform:scaleX(1.0027);color:#d8d8d8;font-weight:normal;">245.15</div>
<div class="t" style="left:1064.14px;top:670.29px;font-size:9.43px;line-height:9.43px;transform:scaleX(1.0948);color:#d8d8d8;font-weight:normal;">Y:</div>
<div class="t" style="left:1081.56px;top:670.29px;font-size:9.43px;line-height:9.43px;transform:scaleX(1.0492);color:#d8d8d8;font-weight:normal;">111.95</div>
<div class="t" style="left:1118.77px;top:662.16px;font-size:10.29px;line-height:10.29px;transform:scaleX(0.8781);color:#e8e8e8;font-weight:normal;">Z:</div>
<div class="t" style="left:1139.31px;top:662.16px;font-size:10.29px;line-height:10.29px;transform:scaleX(0.9495);color:#e8e8e8;font-weight:normal;">93%</div>
<div class="t" style="left:1195.59px;top:662.16px;font-size:10.29px;line-height:10.29px;transform:scaleX(0.9265);color:#e8e8e8;font-weight:normal;">R:</div>
<div class="t" style="left:1219.44px;top:662.16px;font-size:10.29px;line-height:10.29px;transform:scaleX(0.9957);color:#e8e8e8;font-weight:normal;">0.00°</div>
<div class="t" style="left:44.05px;top:101.67px;font-size:31.33px;line-height:31.33px;transform:scaleX(1.0668);color:#f6d67a;font-weight:900;-webkit-text-stroke:8.5px #0b0b0b;">選択ツール</div>
<div class="t" style="left:44.05px;top:101.67px;font-size:31.33px;line-height:31.33px;transform:scaleX(1.0668);color:#f6d67a;font-weight:900;-webkit-text-stroke:1.5px #f6d67a;">選択ツール</div>
<div class="t" style="left:895.35px;top:213.89px;font-size:30.56px;line-height:30.56px;transform:scaleX(1.0556);color:#f6d67a;font-weight:900;-webkit-text-stroke:8.5px #0b0b0b;">整列で</div>
<div class="t" style="left:895.35px;top:213.89px;font-size:30.56px;line-height:30.56px;transform:scaleX(1.0556);color:#f6d67a;font-weight:900;-webkit-text-stroke:1.5px #f6d67a;">整列で</div>
<div class="t" style="left:895.91px;top:262.00px;font-size:29.80px;line-height:29.80px;transform:scaleX(1.1291);color:#f6d67a;font-weight:900;-webkit-text-stroke:8.5px #0b0b0b;">中央揃え</div>
<div class="t" style="left:895.91px;top:262.00px;font-size:29.80px;line-height:29.80px;transform:scaleX(1.1291);color:#f6d67a;font-weight:900;-webkit-text-stroke:1.5px #f6d67a;">中央揃え</div>
<svg style="left:0;top:0" width="1280" height="720"><path d="M3,11 L8,4 L13,11 L10.5,10 L8,12.5 L5.5,10 Z" fill="#cfcfcf"/><path d="M5,9.5 L8,6 L11,9.5" fill="#2a2a2a"/><rect x="1176" y="8.5" width="9" height="1.2" fill="#e0e0e0"/><rect x="1215.5" y="6.5" width="7" height="7" fill="none" stroke="#e0e0e0" stroke-width="1.3"/><path d="M1217.5,6.5 V4.8 H1224 V11.3 H1222.5" fill="none" stroke="#e0e0e0" stroke-width="1.1"/><path d="M1254.5,4.5 L1263,13 M1263,4.5 L1254.5,13" stroke="#e8e8e8" stroke-width="1.2"/><g opacity="1"><rect x="8.5" y="46.5" width="11" height="11" fill="none" stroke="#f2f2f2" stroke-width="1" stroke-dasharray="1.5,1"/><circle cx="15.5" cy="50.5" r="2.8" fill="#f2f2f2"/><rect x="9.5" y="52.5" width="5" height="4" fill="#f2f2f2"/></g><rect x="35.5" y="46.5" width="11" height="11" fill="none" stroke="#f2f2f2" stroke-width="1" stroke-dasharray="1.5,1"/><rect x="37.5" y="48.5" width="7" height="1.6" fill="#f2f2f2"/><rect x="37.5" y="51.5" width="7" height="1.6" fill="#f2f2f2"/><rect x="37.5" y="54.5" width="7" height="1.6" fill="#f2f2f2"/><g opacity="0.45"><rect x="63.5" y="46.5" width="11" height="11" fill="none" stroke="#f2f2f2" stroke-width="1" stroke-dasharray="1.5,1"/><circle cx="70.5" cy="50.5" r="2.8" fill="#f2f2f2"/><rect x="64.5" y="52.5" width="5" height="4" fill="#f2f2f2"/></g><rect x="91.5" y="49.5" width="8" height="8" fill="none" stroke="#f2f2f2" stroke-width="1" stroke-dasharray="1.5,1"/><rect x="97" y="46" width="5" height="5" fill="#f2f2f2"/><path d="M122,55 V50 Q122,47 125,47 H128 V55 Z" fill="#1f7a2e"/><path d="M124,52 L126,49 L128,52" stroke="#8fd08f" fill="none" stroke-width="0.8"/><rect x="129.5" y="46" width="3" height="8" fill="#aaa"/><rect x="121" y="55.5" width="9" height="2.5" fill="#f2f2f2"/><rect x="150" y="47" width="3" height="8" fill="#aaa"/><path d="M154,55 V50 Q154,48 157,48 H161 V55 Z" fill="#1f7a2e"/><rect x="154" y="55.5" width="9" height="2.5" fill="#f2f2f2"/><path d="M182.5,46 V58 M181.5,46.5 L176.5,56 H181.5 Z M184,47 L189.5,56 H184 Z" fill="#f2f2f2" stroke="#f2f2f2" stroke-width="0.8" stroke-dasharray="1.5,0.8"/><path d="M205,46.5 L216,52.5 L205,58 L207.5,52.5 Z" fill="#f2f2f2"/><rect x="234" y="47" width="7" height="1.5" fill="#f2f2f2"/><rect x="234" y="50" width="7" height="1.5" fill="#f2f2f2"/><rect x="234" y="53" width="7" height="1.5" fill="#f2f2f2"/><rect x="234" y="56" width="7" height="1.5" fill="#f2f2f2"/><rect x="234" y="46" width="12" height="1.8" fill="#f2f2f2"/><path d="M241,49 L245,49 L243,58 Z" fill="#2fae3f"/><rect x="262" y="47" width="7" height="1.5" fill="#f2f2f2"/><rect x="262" y="50" width="7" height="1.5" fill="#f2f2f2"/><rect x="262" y="53" width="7" height="1.5" fill="#f2f2f2"/><rect x="262" y="56" width="7" height="1.5" fill="#f2f2f2"/><rect x="262" y="49" width="12" height="1.8" fill="#f2f2f2"/><rect x="269" y="53" width="5" height="4" fill="#2fae3f"/><rect x="289" y="47" width="5" height="1.5" fill="#f2f2f2"/><rect x="289" y="50" width="5" height="1.5" fill="#f2f2f2"/><rect x="289" y="53" width="5" height="1.5" fill="#f2f2f2"/><rect x="289" y="56" width="5" height="1.5" fill="#f2f2f2"/><rect x="289" y="54" width="12" height="1.8" fill="#f2f2f2"/><rect x="296" y="47" width="5" height="4" fill="#2fae3f"/><rect x="316" y="47" width="5" height="1.5" fill="#f2f2f2"/><rect x="316" y="50" width="5" height="1.5" fill="#f2f2f2"/><rect x="316" y="53" width="5" height="1.5" fill="#f2f2f2"/><rect x="316" y="56" width="5" height="1.5" fill="#f2f2f2"/><rect x="316" y="57" width="12" height="1.8" fill="#f2f2f2"/><rect x="323" y="46" width="3" height="8" fill="#2fae3f"/><rect x="531.5" y="48" width="10" height="3" fill="#ccc"/><rect x="531.5" y="52" width="10" height="5" fill="#ccc" opacity="0.8"/><path d="M639.5,50 V48.5 A3,3 0 0 1 645.5,48.5 V50" fill="none" stroke="#f2f2f2" stroke-width="1.5"/><rect x="638" y="50" width="9" height="7" rx="1" fill="#f2f2f2"/><rect x="811" y="46" width="10" height="7" fill="none" stroke="#f2f2f2" stroke-width="1"/><rect x="811" y="55" width="4" height="2.5" fill="#f2f2f2"/><rect x="817" y="55" width="4" height="2.5" fill="#f2f2f2"/><path d="M813,48.5 H819 M813,50.5 H819" stroke="#f2f2f2" stroke-width="1"/><rect x="838" y="46" width="10" height="7" fill="none" stroke="#f2f2f2" stroke-width="1"/><rect x="838" y="55" width="4" height="2.5" fill="#f2f2f2"/><rect x="844" y="55" width="4" height="2.5" fill="#f2f2f2"/><path d="M840,48.5 H846 M840,50.5 H846" stroke="#f2f2f2" stroke-width="1"/><rect x="865.5" y="46" width="10" height="7" fill="none" stroke="#f2f2f2" stroke-width="1"/><rect x="865.5" y="55" width="4" height="2.5" fill="#f2f2f2"/><rect x="871.5" y="55" width="4" height="2.5" fill="#f2f2f2"/><path d="M867.5,48.5 H873.5 M867.5,50.5 H873.5" stroke="#f2f2f2" stroke-width="1"/><rect x="892.5" y="46" width="10" height="7" fill="none" stroke="#f2f2f2" stroke-width="1"/><rect x="892.5" y="55" width="4" height="2.5" fill="#f2f2f2"/><rect x="898.5" y="55" width="4" height="2.5" fill="#f2f2f2"/><path d="M894.5,48.5 H900.5 M894.5,50.5 H900.5" stroke="#f2f2f2" stroke-width="1"/><path d="M1233,48 A5.5,5.5 0 1 1 1233,57" fill="none" stroke="#f2f2f2" stroke-width="2.2"/><circle cx="1232.5" cy="52.5" r="1.5" fill="#f2f2f2"/><path d="M1266,48.5 L1262,52.5 L1266,56.5" fill="none" stroke="#e0e0e0" stroke-width="1.6"/><path d="M30,73 V72 A2.5,2.5 0 0 1 35,72" fill="none" stroke="#f2f2f2" stroke-width="1.3"/><rect x="24.5" y="73" width="7" height="6" fill="#f2f2f2"/><rect x="724.5" y="70.5" width="9" height="6.5" fill="none" stroke="#ddd" stroke-width="1.1"/><rect x="726" y="78" width="6" height="1.3" fill="#ddd"/><rect x="0" y="69.5" width="20" height="22.5" fill="#f4d47c"/><rect x="2.5" y="73.5" width="14" height="14.5" fill="#1c3658"/><path d="M6,75.5 L6,85 L8.3,82.5 L10.5,86.5 L12,85.7 L10,81.8 L13,81.5 Z" fill="#e8f0ff" stroke="#0a1a33" stroke-width="0.6"/><g transform="translate(9,100) scale(0.88)"><rect x="-5" y="-6" width="6" height="6" fill="#f2f2f2"/><rect x="-3.5" y="-4.5" width="3" height="3" fill="#2b2b2b"/><rect x="-5" y="-1" width="1.5" height="6" fill="#f2f2f2"/><path d="M2,2 L6,4.5 L2,6 Z" fill="#f2f2f2"/></g><g transform="translate(9,121) scale(0.88)"><circle cx="-1.5" cy="-1.5" r="4" fill="none" stroke="#f2f2f2" stroke-width="1.6"/><rect x="0" y="0" width="5.5" height="5.5" fill="#2b2b2b" stroke="#f2f2f2" stroke-width="1.6"/></g><g transform="translate(9,143.7) scale(0.88)"><rect x="-5.5" y="-5.5" width="11" height="11" fill="#b8006a" stroke="#ffd6ee" stroke-width="1.7"/></g><g transform="translate(9,165) scale(0.88)"><circle cx="0" cy="0" r="5.5" fill="#b8006a" stroke="#ffd6ee" stroke-width="1.7"/></g><g transform="translate(9,187) scale(0.88)"><path d="M-2,-6 L0,-2 L4.5,-2 L1,1 L2.5,5.5 L-2,3 L-6,5.5 L-4.5,1 L-7.5,-2 L-3.5,-2 Z" fill="#b8006a" stroke="#ffd6ee" stroke-width="1.7" transform="translate(1,0)"/></g><g transform="translate(9,208) scale(0.88)"><path d="M0,-6 L5.5,-3 V3.5 L0,6.5 L-5.5,3.5 V-3 Z" fill="#b8006a" stroke="#ffd6ee" stroke-width="1.7"/><path d="M-5.5,-3 L0,0 L5.5,-3 M0,0 V6.5" stroke="#f5c0dc" stroke-width="1"/></g><g transform="translate(9,229) scale(0.88)"><path d="M0,0.5 A1.8,1.8 0 0 1 2,-1 A3.5,3.5 0 0 1 -2.5,3.5 A5,5 0 0 1 -4,-4 A6,6 0 0 1 5.5,1" fill="none" stroke="#f2f2f2" stroke-width="1.6"/></g><g transform="translate(9,252) scale(0.88)"><path d="M-1,4 Q-1,-3 5,-4 Q6,3 -1,4 Z" fill="none" stroke="#f2f2f2" stroke-width="1.4"/><rect x="-6" y="-5" width="2" height="9" fill="#2fae3f"/></g><g transform="translate(9,273.6) scale(0.88)"><path d="M-3,4 L4,-4 L6,-2 L-1,6 Z" fill="#f2f2f2"/><rect x="-6" y="-6" width="2" height="7" fill="#2fae3f"/></g><g transform="translate(9,294.4) scale(0.88)"><path d="M-2,3 L5,-5 L6,-4 L-1,4 Z" fill="#f2f2f2"/><path d="M-6,1 L-3,4 L0,-2" fill="none" stroke="#2fae3f" stroke-width="1.6"/></g><g transform="translate(9,316.7) scale(0.88)"><path d="M-6,5 L-2.5,-5 H-0.5 L3,5 H1 L0,2 H-3.5 L-4.5,5 Z M-3,0 H-1 L-1.8,-3 Z" fill="#f2f2f2"/><rect x="4.5" y="-5" width="1.5" height="10" fill="#2fae3f"/></g><defs><linearGradient id="gt" x1="0" y1="0" x2="1" y2="1"><stop offset="0" stop-color="#1e5f9e"/><stop offset="1" stop-color="#9fd8ff"/></linearGradient></defs><g transform="translate(9,339) scale(0.88)"><rect x="-5.5" y="-5.5" width="11" height="11" fill="url(#gt)" stroke="#f2f2f2" stroke-width="1.2"/></g><g transform="translate(9,360.6) scale(0.88)"><rect x="-5.5" y="-5.5" width="11" height="11" fill="#1d4f7a" stroke="#f2f2f2" stroke-width="1.2"/><path d="M-3,-3 L0,0 L3,-3 M0,0 L3,3 M0,0 L-3,3" stroke="#f2f2f2" stroke-width="1.3"/></g><g transform="translate(9,382) scale(0.88)"><path d="M-5,5 L2,-2 L4,0 L-3,7" fill="none" stroke="#f2f2f2" stroke-width="1.4"/><circle cx="-3" cy="-3" r="2.5" fill="#2b8fb0"/><rect x="2" y="-6" width="4" height="4" fill="#f2f2f2" transform="rotate(45 4 -4)"/></g><g transform="translate(9,404) scale(0.88)"><rect x="-3" y="-5" width="8" height="6" fill="#f2f2f2" transform="rotate(-35 1 -2)"/><circle cx="-4" cy="3.5" r="2" fill="#2b8fb0"/></g><g transform="translate(9,427.8) scale(0.88)"><path d="M-6,5 H6 V2 Q3,-1 1,1 Q1,-5 -3,-4 L-6,1 Z" fill="#f2f2f2"/></g><g transform="translate(9,448.6) scale(0.88)"><rect x="-3.5" y="-1" width="8" height="6" fill="#f2f2f2"/><path d="M0,-6 L3,-2 H-3 Z" fill="#f2f2f2"/><circle cx="-6" cy="-4" r="1" fill="#aaa"/><circle cx="-5" cy="-1" r="0.8" fill="#aaa"/></g><g transform="translate(9,469.4) scale(0.88)"><rect x="0" y="-6" width="6" height="6" fill="#f2f2f2" transform="rotate(45 3 -3)"/><rect x="-3" y="3" width="9" height="1.5" fill="#f2f2f2"/><circle cx="-5" cy="0" r="1" fill="#f2f2f2"/><circle cx="-5" cy="4" r="1" fill="#f2f2f2"/></g><g transform="translate(9,490) scale(0.88)"><path d="M-6,-5 L-1,1 L2,-1 L5,4" fill="none" stroke="#f2f2f2" stroke-width="1.6"/><path d="M2,4 L6,5.5 L5.5,1 Z" fill="#f2f2f2"/></g><g transform="translate(9,514) scale(0.88)"><rect x="-4" y="-6" width="8" height="12" fill="none" stroke="#f2f2f2" stroke-width="1.4"/><rect x="-1.5" y="-3" width="3" height="5" fill="#f2f2f2"/></g><g transform="translate(9,536) scale(0.88)"><circle cx="-1" cy="-1" r="4" fill="none" stroke="#f2f2f2" stroke-width="1.6"/><path d="M2,2 L5.5,5.5" stroke="#f2f2f2" stroke-width="2"/></g><g transform="translate(9,557) scale(0.88)"><rect x="-2.5" y="-6" width="8" height="9" fill="none" stroke="#f2f2f2" stroke-width="1.4"/><rect x="-6" y="-2.5" width="8" height="9" fill="#2b2b2b" stroke="#f2f2f2" stroke-width="1.4"/></g><g transform="translate(765,81.6) scale(0.88)"><path d="M-5,-5 H0.5 L3.5,-2 V5 H-5 Z" fill="none" stroke="#f2f2f2" stroke-width="2.2"/><path d="M-1,1 H6 M3.5,-1.5 L6,1 L3.5,3.5" fill="none" stroke="#2a8a3a" stroke-width="1.8"/></g><g transform="translate(806,81.6) scale(0.88)"><path d="M-5,6 V-5 H5" fill="none" stroke="#f2f2f2" stroke-width="2"/><path d="M-3.5,5.5 L5,-4.5" stroke="#f2f2f2" stroke-width="2"/><path d="M-3.5,5.5 L0,1.5" stroke="#2fb0a0" stroke-width="2"/></g><g transform="translate(849.4,81.6) scale(0.88)"><path d="M-4,-4 H4" stroke="#3a9ad0" stroke-width="2.2" stroke-linecap="round"/><path d="M-5,0 H5 M-4.5,4 H4.5" stroke="#f2f2f2" stroke-width="2.2" stroke-linecap="round"/></g><g transform="translate(891,81.6) scale(0.88)"><path d="M-4.5,-3.5 L2,-6 L5,-4.5 V4 L-1.5,6.5 L-4.5,5 Z" fill="#f2f2f2"/><path d="M-1.5,-2.5 V5 M1.5,-4 V4" stroke="#282828" stroke-width="1"/></g><g transform="translate(933.75,81.6) scale(0.88)"><path d="M-4,4.5 L-1,1 L4.5,-3 M-4,-1 L-1,1" fill="none" stroke="#f2f2f2" stroke-width="1.8"/><circle cx="-4.5" cy="5" r="1.8" fill="#f2f2f2"/><circle cx="5" cy="-3.5" r="1.8" fill="#f2f2f2"/></g><g transform="translate(976,81.6) scale(0.88)"><circle cx="-0.5" cy="-0.5" r="4.3" fill="none" stroke="#f2f2f2" stroke-width="1.8"/><path d="M2.5,2.5 L5.5,5.5" stroke="#f2f2f2" stroke-width="2"/></g><g transform="translate(1020,81.6) scale(0.88)"><circle cx="1.5" cy="-2" r="4.5" fill="#2a9fd8"/><path d="M-6,2 L-1,-1 L1,5 Z" fill="#f2f2f2"/></g><g transform="translate(1063,81.6) scale(0.88)"><path d="M-5,-5 H5 V-3 H1 V6 H-1 V-3 H-5 Z" fill="#f2f2f2"/></g><g transform="translate(1105.5,81.6) scale(0.88)"><rect x="-5" y="1" width="5" height="5" fill="#f2f2f2"/><path d="M-3,-4 L5,3 M-2,3 L3,-5" stroke="#2fae3f" stroke-width="1.6"/></g><g transform="translate(1147.6,81.6) scale(0.88)"><rect x="-5" y="-6" width="1.2" height="12" fill="#f2f2f2"/><rect x="-3" y="-5" width="5" height="2.5" fill="#f2f2f2"/><rect x="-3" y="-1.5" width="8" height="2.5" fill="#f2f2f2"/><rect x="-3" y="2" width="6" height="2.5" fill="#f2f2f2"/></g><g transform="translate(1161.5,81.6) scale(0.88)"><path d="M-3,-3 L3,3 M3,-3 L-3,3" stroke="#aaa" stroke-width="1.3"/></g><g transform="translate(1195,81.6) scale(0.88)"><circle cx="0.5" cy="-0.5" r="4.5" fill="none" stroke="#f2f2f2" stroke-width="1.8"/><rect x="-5" y="2" width="4" height="4" fill="#f2f2f2"/><path d="M0.5,-2 V1" stroke="#2fae3f" stroke-width="1.2"/></g><g transform="translate(1235,81.6) scale(0.88)"><path d="M-4,-2 L0,2 L4,-2" fill="none" stroke="#9a9a9a" stroke-width="1.5"/></g><g transform="translate(760,105)"><rect x="-3" y="-4" width="5" height="1.5" fill="#f2f2f2"/><rect x="-3" y="-1" width="7" height="1.5" fill="#f2f2f2"/><rect x="-3" y="2" width="5" height="1.5" fill="#f2f2f2"/></g><g transform="translate(808.5,105.5)"><rect x="-4.5" y="-4.5" width="9" height="9" fill="#f2f2f2"/><path d="M-1.5,-4.5 V4.5 M1.5,-4.5 V4.5 M-4.5,-1.5 H4.5 M-4.5,1.5 H4.5" stroke="#2b2b2b" stroke-width="0.8"/></g><g transform="translate(865.5,105.5)"><circle r="3.5" fill="none" stroke="#f2f2f2" stroke-width="2" stroke-dasharray="2.5,1.2"/></g><g transform="translate(760.5,171)"><rect x="-3" y="-3.5" width="6" height="1.5" fill="#f2f2f2"/><rect x="-1" y="-0.7" width="5" height="1.5" fill="#f2f2f2"/><rect x="-3" y="2" width="6" height="1.5" fill="#f2f2f2"/><path d="M-5,-2 L-3,-0 L-5,2" stroke="#2fae3f" stroke-width="1" fill="none"/></g><g transform="translate(758.4,216)" opacity="1"><rect x="-4" y="-4" width="7" height="3" fill="#f2f2f2"/><rect x="-4" y="0" width="7" height="3.5" fill="#f2f2f2"/><rect x="3.5" y="-6" width="1" height="12" fill="#2fae3f"/></g><g transform="translate(776,216)" opacity="1"><rect x="-3" y="-4" width="7" height="3" fill="#f2f2f2"/><rect x="-3" y="0" width="7" height="3.5" fill="#f2f2f2"/><rect x="-5" y="-6" width="1" height="12" fill="#2fae3f"/></g><g transform="translate(794.5,216)" opacity="1"><rect x="-4" y="-4" width="8" height="3" fill="#f2f2f2"/><rect x="-4" y="0.5" width="8" height="3.5" fill="#f2f2f2"/><rect x="-0.5" y="-6" width="1" height="12" fill="#2b2b2b"/></g><g transform="translate(812.6,216)" opacity="1"><rect x="-4" y="-4" width="7" height="3" fill="#f2f2f2"/><rect x="-4" y="0" width="7" height="3.5" fill="#f2f2f2"/><rect x="3.5" y="-6" width="1" height="12" fill="#2fae3f"/></g><g transform="translate(830,216)" opacity="1"><rect x="-3" y="-4" width="7" height="3" fill="#f2f2f2"/><rect x="-3" y="0" width="7" height="3.5" fill="#f2f2f2"/><rect x="-5" y="-6" width="1" height="12" fill="#2fae3f"/></g><g transform="translate(845,216)" opacity="1"><path d="M-2,-5 V5 M1,-5 V5" stroke="#2fae3f" stroke-width="1"/><rect x="-1.5" y="-3" width="3" height="6" fill="#f2f2f2" opacity="0.8"/></g><g transform="translate(758.4,238)" opacity="0.3"><rect x="-3" y="-3" width="6" height="6" fill="#888"/></g><g transform="translate(776,238)" opacity="0.3"><rect x="-3" y="-3" width="6" height="6" fill="#888"/></g><g transform="translate(794.5,238)" opacity="0.3"><rect x="-3" y="-3" width="6" height="6" fill="#888"/></g><g transform="translate(812.6,238)" opacity="0.3"><rect x="-3" y="-3" width="6" height="6" fill="#888"/></g><g transform="translate(830,238)" opacity="0.3"><rect x="-3" y="-3" width="6" height="6" fill="#888"/></g><g transform="translate(845,238)" opacity="0.3"><rect x="-3" y="-3" width="6" height="6" fill="#888"/></g><path d="M792.5,222 L792.5,233 L795,230.5 L797,234.5 L798.5,233.8 L796.6,230 L800,229.8 Z" fill="#f4f4f4" stroke="#111" stroke-width="0.7"/><g transform="translate(760.3,284)" opacity="1"><rect x="-5" y="-6" width="1.2" height="12" fill="#f2f2f2"/><rect x="-4.5" y="-2" width="3" height="6" fill="#f2f2f2"/><rect x="0" y="-1" width="4" height="3" fill="#f2f2f2"/></g><g transform="translate(776.7,284)" opacity="1"><rect x="-1" y="-6" width="1.2" height="12" fill="#f2f2f2"/><rect x="-4.5" y="-2" width="3" height="6" fill="#f2f2f2"/><rect x="1" y="-1" width="4" height="3" fill="#f2f2f2"/></g><g transform="translate(794.8,284)" opacity="1"><rect x="3" y="-6" width="1.2" height="12" fill="#f2f2f2"/><rect x="-4.5" y="-2" width="3" height="4" fill="#f2f2f2"/><rect x="0" y="-2" width="3" height="6" fill="#f2f2f2"/></g><g transform="translate(811.7,284)" opacity="1"><rect x="-5" y="-6" width="11" height="1.2" fill="#2fae3f"/><rect x="-5" y="-2" width="3" height="5" fill="#f2f2f2"/><rect x="-1" y="-2" width="3" height="4" fill="#f2f2f2"/><rect x="3" y="-2" width="2" height="6" fill="#f2f2f2"/></g><g transform="translate(829.2,284)" opacity="1"><rect x="-5" y="-6" width="10" height="1.2" fill="#2fae3f"/><text x="-5" y="4" font-size="9" fill="#f2f2f2" font-family="Liberation Sans">ay</text></g><g transform="translate(760,306.4)" opacity="1"><rect x="-4" y="-4" width="7" height="3" fill="#f2f2f2"/><rect x="-3" y="1" width="5" height="3" fill="#f2f2f2"/><rect x="-6" y="-2" width="12" height="0.8" fill="#f2f2f2" opacity="0.6"/></g><g transform="translate(777,306.4)" opacity="1"><rect x="-4" y="-4" width="7" height="3" fill="#f2f2f2"/><rect x="-3" y="1" width="5" height="3" fill="#f2f2f2"/><rect x="-6" y="0" width="12" height="0.8" fill="#f2f2f2" opacity="0.6"/></g><g transform="translate(795,306.4)" opacity="1"><rect x="-3" y="-4" width="5" height="3" fill="#f2f2f2"/><rect x="-4" y="1" width="8" height="3" fill="#f2f2f2"/><rect x="-6" y="3" width="12" height="0.8" fill="#f2f2f2" opacity="0.6"/></g><g transform="translate(812,306.4)" opacity="1"><rect x="-3" y="-5" width="7" height="2" fill="#f2f2f2"/><rect x="-3" y="-1" width="6" height="2.5" fill="#f2f2f2"/><rect x="-3" y="3" width="7" height="2" fill="#f2f2f2"/><rect x="-5" y="-5" width="1" height="10" fill="#2fae3f"/></g><g transform="translate(829,306.4)" opacity="1"><rect x="-5" y="-5" width="1.2" height="10" fill="#2fae3f"/><rect x="-5" y="4" width="4" height="1.2" fill="#2fae3f"/><text x="-1" y="4" font-size="8" fill="#f2f2f2" font-family="Liberation Sans">y</text><text x="1" y="-1" font-size="6" fill="#f2f2f2" font-family="Liberation Sans">o</text></g><g transform="translate(759.8,351.25)" opacity="1"><circle cx="-3" cy="-3" r="1.8" fill="none" stroke="#f2f2f2" stroke-width="1.2"/><circle cx="3" cy="-2" r="1.5" fill="#f2f2f2"/><circle cx="1" cy="3.5" r="1.8" fill="none" stroke="#f2f2f2" stroke-width="1.2"/><path d="M-3,-1 L1,2" stroke="#f2f2f2" stroke-width="1"/></g><g transform="translate(777.8,351.25)" opacity="1"><rect x="-4" y="-5" width="3" height="3" fill="#f2f2f2"/><rect x="0" y="-2" width="3" height="3" fill="#f2f2f2"/><rect x="1" y="2" width="4" height="4" fill="#f2f2f2"/><rect x="-4" y="1" width="3" height="4" fill="#2a7ab0"/></g><g transform="translate(795,351.25)" opacity="1"><rect x="-4" y="-5" width="3" height="3" fill="#f2f2f2"/><rect x="0" y="-2" width="3" height="3" fill="#f2f2f2"/><rect x="1" y="2" width="4" height="4" fill="#f2f2f2"/><rect x="-4" y="1" width="3" height="4" fill="#2a7ab0"/></g><g transform="translate(813,351.25)" opacity="1"><rect x="-4" y="-5" width="3" height="3" fill="#f2f2f2"/><rect x="0" y="-2" width="3" height="3" fill="#f2f2f2"/><rect x="1" y="2" width="4" height="4" fill="#f2f2f2"/><rect x="-4" y="1" width="3" height="4" fill="#2a6a70"/></g><g transform="translate(829.4,351.25)" opacity="1"><circle cx="0" cy="0" r="4.5" fill="none" stroke="#f2f2f2" stroke-width="2" stroke-dasharray="2.5,1.3"/><circle r="1.3" fill="#f2f2f2"/></g><g transform="translate(847.3,351.25)" opacity="1"><circle cx="3.5" cy="-4" r="1.5" fill="#f2f2f2"/><circle cx="-4" cy="0" r="1.5" fill="#f2f2f2"/><circle cx="3.5" cy="4" r="1.5" fill="#f2f2f2"/><path d="M3.5,-4 L-4,0 L3.5,4" fill="none" stroke="#f2f2f2" stroke-width="1"/></g><rect x="920" y="393" width="2.2" height="2" fill="#f2f2f2"/><rect x="920" y="396" width="2.2" height="9" fill="#f2f2f2"/><rect x="924" y="393" width="2.4" height="12" fill="#f2f2f2"/><rect x="928.3" y="393" width="2.4" height="12" fill="#f2f2f2"/><g transform="translate(1263.3,81.6) scale(0.85)"><path d="M-4.5,-5.5 H1.5 L4.5,-2.5 V5.5 H-4.5 Z" fill="none" stroke="#f2f2f2" stroke-width="1.5"/><circle cx="4" cy="-5" r="1.6" fill="#2fae3f"/></g><g transform="translate(1263.3,105.6) scale(0.85)"><path d="M-5,-4.5 H-1 L0,-3 H5 V5 H-5 Z" fill="none" stroke="#f2f2f2" stroke-width="1.5"/><path d="M-5,5 L-3,-0.5 H6 L4,5 Z" fill="#f2f2f2"/></g><g transform="translate(1263.3,129.5) scale(0.85)"><path d="M-5,1 V5 H5 V1" fill="none" stroke="#f2f2f2" stroke-width="1.5"/><rect x="-5" y="2" width="10" height="3" fill="#f2f2f2"/><path d="M-2,-5 H2 V-1 H4 L0,2.5 L-4,-1 H-2 Z" fill="#2fae3f"/></g><g transform="translate(1263.3,153.5) scale(0.85)"><rect x="-3" y="-5.5" width="6" height="3" fill="#f2f2f2"/><rect x="-5" y="-2" width="10" height="5" rx="1" fill="#f2f2f2"/><rect x="-3" y="3" width="6" height="2.5" fill="#f2f2f2"/></g><g transform="translate(1263.3,182.7) scale(0.85)"><path d="M-4.5,-5.5 H1.5 L4.5,-2.5 V5.5 H-4.5 Z" fill="none" stroke="#f2f2f2" stroke-width="1.5"/><path d="M-6,1 H1 M-1.5,-1.5 L1,1 L-1.5,3.5" fill="none" stroke="#2fae3f" stroke-width="1.4"/></g><g transform="translate(1263.3,207.7) scale(0.85)"><path d="M-4.5,-5.5 H1.5 L4.5,-2.5 V5.5 H-4.5 Z" fill="none" stroke="#f2f2f2" stroke-width="1.5"/><path d="M0,2 H6 M3.5,-0.5 L6,2 L3.5,4.5" fill="none" stroke="#2fae3f" stroke-width="1.4"/></g><g transform="translate(1263.3,233.7) scale(0.85)"><path d="M-4,-1 H2 A3,3 0 0 1 2,5 H-1" fill="none" stroke="#f2f2f2" stroke-width="1.6"/><path d="M-5,-1 L-2,-4 V2 Z" fill="#f2f2f2"/></g><g transform="translate(1263.3,258.7) scale(0.85)"><path d="M4,-1 H-2 A3,3 0 0 0 -2,5 H1" fill="none" stroke="#777" stroke-width="1.6"/><path d="M5,-1 L2,-4 V2 Z" fill="#777"/></g><g transform="translate(1263.3,285.8) scale(0.85)"><rect x="-5" y="-5" width="6.5" height="7" fill="#f2f2f2"/><rect x="-2" y="-2" width="7" height="7" fill="#aaa" stroke="#303030" stroke-width="0.8"/></g><g transform="translate(1263.3,311.8) scale(0.85)"><circle cx="-3" cy="3.5" r="2.2" fill="none" stroke="#f2f2f2" stroke-width="1.4"/><circle cx="3" cy="3.5" r="2.2" fill="none" stroke="#f2f2f2" stroke-width="1.4"/><path d="M-2,2 L3,-6 M2,2 L-3,-6" stroke="#f2f2f2" stroke-width="1.3"/></g><g transform="translate(1263.3,335.8) scale(0.85)"><rect x="-4.5" y="-5" width="9" height="10.5" fill="#999"/><rect x="-2.5" y="-3" width="6" height="7" fill="#f2f2f2"/></g><g transform="translate(1263.3,361.8) scale(0.85)"><circle cx="0" cy="-1" r="4.5" fill="#f2f2f2"/><rect x="-3" y="4" width="6" height="1.5" fill="#f2f2f2"/></g><g transform="translate(1263.3,387.9) scale(0.85)"><circle cx="-0.5" cy="-0.5" r="4.5" fill="#f2f2f2"/><circle cx="-0.5" cy="-0.5" r="2" fill="#999"/><path d="M2.5,2.5 L5.5,5.5" stroke="#f2f2f2" stroke-width="1.8"/></g><g transform="translate(1263.3,412.9) scale(0.85)"><circle cx="-0.5" cy="-0.5" r="4.5" fill="none" stroke="#f2f2f2" stroke-width="1.8"/><path d="M2.5,2.5 L5.5,5.5" stroke="#f2f2f2" stroke-width="1.8"/><circle cx="-0.5" cy="-0.5" r="1.5" fill="#f2f2f2"/></g><g transform="translate(1263.3,436.8) scale(0.85)"><circle cx="-0.5" cy="-0.5" r="4.5" fill="#f2f2f2"/><rect x="-2.5" y="-3" width="4" height="5" fill="#555"/><path d="M2.5,2.5 L5.5,5.5" stroke="#f2f2f2" stroke-width="1.8"/></g><g transform="translate(1263.3,465) scale(0.85)"><rect x="-5" y="-5" width="10" height="10" fill="none" stroke="#f2f2f2" stroke-width="1.2" stroke-dasharray="2,1"/><rect x="-1" y="-2" width="3" height="4" fill="#f2f2f2"/></g><g transform="translate(1263.3,488.9) scale(0.85)"><rect x="-5" y="-5.5" width="7" height="7" fill="#f2f2f2"/><rect x="-1" y="-2" width="7" height="7" fill="#1fb531"/></g><g transform="translate(1263.3,514.6) scale(0.85)"><rect x="-5" y="-5.5" width="7" height="7" fill="#f2f2f2"/><rect x="-1.5" y="-2" width="7" height="7.5" fill="#303030" stroke="#f2f2f2" stroke-width="1.3"/><rect x="0.5" y="0" width="3" height="3" fill="#f2f2f2"/></g><g transform="translate(1263.3,541.7) scale(0.85)"><circle cx="-1" cy="0" r="3" fill="#f2f2f2"/><circle cx="2" cy="1.5" r="2.2" fill="#f2f2f2" opacity="0.8"/><path d="M-6,-5 H-4 M4,-5 H6 M-6,6 H6" stroke="#2fae3f" stroke-width="1.2"/></g><g transform="translate(1263.3,566.7) scale(0.85)"><circle r="3.2" fill="#f2f2f2"/><path d="M-5,-5 L-3,-3 M5,-5 L3,-3 M-5,5 L-3,3 M5,5 L3,3" stroke="#f2f2f2" stroke-width="1.4"/></g><rect x="1253.5" y="580.5" width="21.5" height="20.5" rx="3" fill="#2c2c2c" stroke="#242424"/><path d="M1259.5,589 L1263.5,593 L1267.5,589" fill="none" stroke="#e0e0e0" stroke-width="1.6"/><path d="M1254,624 L1258,620 L1262,624" fill="none" stroke="#777" stroke-width="1.3"/><path d="M1254,638 L1258,642 L1262,638" fill="none" stroke="#777" stroke-width="1.3"/><rect x="1268" y="636.5" width="10" height="1.6" fill="#f2f2f2"/><rect x="1268" y="640.5" width="10" height="1.6" fill="#f2f2f2"/><rect x="1268" y="644.5" width="10" height="1.6" fill="#f2f2f2"/><path d="M237,666 Q241.5,661 246,666 Q241.5,671 237,666 Z" fill="none" stroke="#f2f2f2" stroke-width="1.4"/><circle cx="241.5" cy="666" r="1.6" fill="#f2f2f2"/><path d="M238,662 L239,663.5 M245,662 L244,663.5" stroke="#f2f2f2" stroke-width="1"/><path d="M266.5,665 V663.5 A2.3,2.3 0 0 1 271,663.5" fill="none" stroke="#f2f2f2" stroke-width="1.3"/><rect x="262" y="665" width="7" height="6" fill="#f2f2f2"/><path d="M64,658.5 H70 M64,661 H70 M68.5,656.5 L65.5,663" stroke="#ccc" stroke-width="0.9"/><path d="M64,671.5 H70 M64,674 H70 M68.5,669.5 L65.5,676" stroke="#ccc" stroke-width="0.9"/><path d="M977,441 Q985,447 996,445 Q1008,442 1014,436 Q1018,433 1019,437 Q1019,441 1016,440 Q1014,437 1020,435 Q1040,431 1058,425 Q1066,419 1068,410" fill="none" stroke="#e8e8e8" stroke-width="1.1"/></svg>
<div class="t" style="left:979px;top:426px;font-size:14px;line-height:14px;color:#ececec;transform:rotate(-13deg) scaleY(1.1);transform-origin:0 100%;letter-spacing:5px;-webkit-text-stroke:0.1px #ececec">初期費用</div>
</body></html>
